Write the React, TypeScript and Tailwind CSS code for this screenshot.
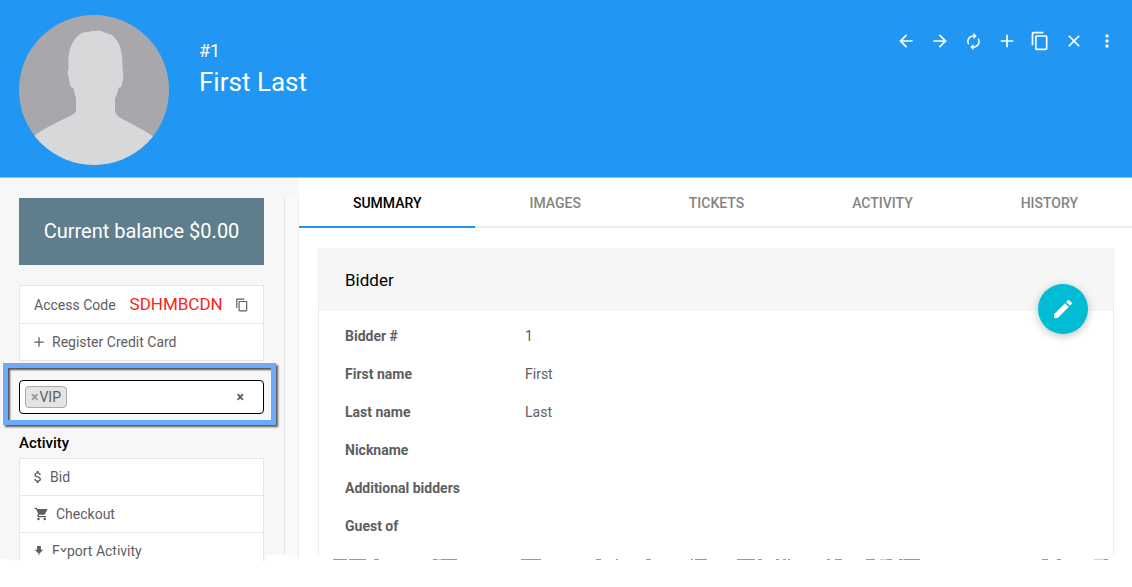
import React from "react";

type IconProps = { className?: string; children: React.ReactNode; box?: string };

function Icon({ className = "size-5", children, box = "0 0 24 24" }: IconProps) {
  return (
    <svg viewBox={box} className={className} fill="currentColor" aria-hidden="true">
      {children}
    </svg>
  );
}

const arrowBack = <path d="M20 11H7.8l5.6-5.6L12 4l-8 8 8 8 1.4-1.4L7.8 13H20v-2z" />;
const arrowForward = <path d="M12 4l-1.4 1.4 5.6 5.6H4v2h12.2l-5.6 5.6L12 20l8-8-8-8z" />;
const refresh = (
  <path d="M12 6v3l4-4-4-4v3c-4.420 0-8 3.580-8 8 0 1.570.46 3.030 1.240 4.260L6.700 14.800A5.870 5.870 0 0 1 6 12c0-3.310 2.690-6 6-6zm6.760 1.740L17.300 9.200c.44.84.7 1.790.7 2.800 0 3.310-2.690 6-6 6v-3l-4 4 4 4v-3c4.420 0 8-3.580 8-8 0-1.570-.46-3.030-1.240-4.260z" />
);
const plus = <path d="M19.500 13h-6.500v6.500h-2V13H4.500v-2H11V4.500h2V11h6.500v2z" />;
const copy = (
  <path d="M16 1H4a2 2 0 0 0-2 2v14h2V3h12V1zm3 4H8a2 2 0 0 0-2 2v14a2 2 0 0 0 2 2h11a2 2 0 0 0 2-2V7a2 2 0 0 0-2-2zm0 16H8V7h11v14z" />
);
const close = <path d="M19 6.400 17.600 5 12 10.600 6.400 5 5 6.400 10.600 12 5 17.600 6.400 19 12 13.400 17.600 19 19 17.600 13.400 12z" />;
const more = (
  <path d="M12 8a2 2 0 1 0 0-4 2 2 0 0 0 0 4zm0 2a2 2 0 1 0 0 4 2 2 0 0 0 0-4zm0 6a2 2 0 1 0 0 4 2 2 0 0 0 0-4z" />
);
const pencil = (
  <path d="M3 17.250V21h3.750L17.810 9.940l-3.750-3.750L3 17.250zM20.710 7.040a1 1 0 0 0 0-1.410l-2.340-2.340a1 1 0 0 0-1.410 0l-1.830 1.830 3.750 3.750 1.830-1.830z" />
);
const dollar = (
  <path d="M11.800 10.900c-2.270-.59-3-1.200-3-2.150 0-1.090 1.010-1.850 2.700-1.850 1.780 0 2.440.85 2.500 2.100h2.210c-.07-1.720-1.120-3.300-3.210-3.810V3h-3v2.160c-1.940.42-3.500 1.680-3.500 3.610 0 2.310 1.910 3.460 4.700 4.130 2.500.6 3 1.480 3 2.410 0 .69-.49 1.790-2.700 1.790-2.060 0-2.870-.92-2.980-2.100h-2.200c.12 2.190 1.760 3.420 3.680 3.830V21h3v-2.150c1.950-.37 3.500-1.500 3.500-3.550 0-2.840-2.430-3.810-4.700-4.400z" />
);
const cart = (
  <path d="M7 18a2 2 0 1 0 0 4 2 2 0 0 0 0-4zM1 2v2h2l3.600 7.590-1.350 2.450A2 2 0 0 0 7 17h12v-2H7.420a.25.25 0 0 1-.25-.25l.03-.12.900-1.630h7.450c.75 0 1.410-.41 1.750-1.030L20.880 5.480A1 1 0 0 0 20 4H5.210l-.94-2H1zm16 16a2 2 0 1 0 0 4 2 2 0 0 0 0-4z" />
);
const download = <path d="M21 10h-5V2H8v8H3l9 9 9-9zM10 20h4v3h-4z" />;

const actions = [
  { label: "Previous", icon: arrowBack, size: "size-[20px]" },
  { label: "Next", icon: arrowForward, size: "size-[20px]" },
  { label: "Refresh", icon: refresh, size: "size-[19px]" },
  { label: "Add", icon: plus, size: "size-[20px]" },
  { label: "Duplicate", icon: copy, size: "size-[20px]" },
  { label: "Close", icon: close, size: "size-[20px]" },
  { label: "More", icon: more, size: "size-[20px]" },
];

const tabs = ["SUMMARY", "IMAGES", "TICKETS", "ACTIVITY", "HISTORY"];

const fields = [
  ["Bidder #", "1"],
  ["First name", "First"],
  ["Last name", "Last"],
  ["Nickname", ""],
  ["Additional bidders", ""],
  ["Guest of", ""],
];

const activities = [
  { label: "Bid", icon: dollar, size: "w-2 h-4", box: "6 2 12 20" },
  { label: "Checkout", icon: cart, size: "size-[14px]", box: "0 1 22 22" },
  { label: "Export Activity", icon: download, size: "size-[10px]", box: "2 2 20 21" },
];

function Header() {
  return (
    <header className="flex items-start border-b border-[#a9bccb] bg-[#2196f3] px-[19px] pt-[15px] pb-3 text-white">
      <svg viewBox="0 0 150 150" className="size-[150px] shrink-0 rounded-full" role="img" aria-label="Profile picture">
        <rect width="150" height="150" fill="#a8a8ac" />
        <path
          fill="#d6d8da"
          d="M76 16c4-.6 8 .2 10 2l2-.5 1 1.500 3 .5c4 3 8 8 9.500 14 2 7 2 14 2 21 1.500 4 .7 9-.5 15-.6 2.500-2 3-3.500 3.500-1 5-2 8-3.500 10v13c.4 2 2 4 4 6 10 6 24 12 35 20V150H15v-29c12-9 26-15 38-21 3-2 4-3 4-5V83c-1-3-2-6-2.500-10-2-.5-3.500-1-3.500-3-1-5-1-8-2-10-.4-2-.3-4 .5-6-.3-10 0-17 3-24 3-6 7-11 12-12.500 4-1 7-.4 8-1.500z"
        />
      </svg>
      <div className="ml-[30px] flex-1 pt-6">
        <p className="text-lg leading-6">#1</p>
        <h1 className="text-[26px] leading-[38px]">First Last</h1>
      </div>
      <nav aria-label="Record actions" className="-mr-[6px] flex w-[225px] justify-between pt-[14px]">
        {actions.map((a) => (
          <button key={a.label} type="button" aria-label={a.label} className="flex size-6 items-center justify-center">
            <Icon className={a.size}>{a.icon}</Icon>
          </button>
        ))}
      </nav>
    </header>
  );
}

function Sidebar() {
  return (
    <aside className="w-[299px] shrink-0 bg-[#f7f7f7] pt-5">
      <div className="h-full w-full border-r border-[#ececec] bg-[#fafafa] pr-[13px]">
        <div className="h-full border-r border-[#e4e4e4] bg-[#f7f7f7] pr-5 pl-[19px]">
          <div className="bg-[#607d8b] py-5 text-center text-xl leading-[27px] text-white">Current balance $0.00</div>

          <ul className="mt-5 divide-y divide-[#e6e6e6] border border-[#e6e6e6] bg-white text-sm text-[#5e5e5e]">
            <li className="flex h-[38px] items-center px-[14px]">
              <span>Access Code</span>
              <span className="ml-[14px] text-[17px] text-[#fb2418]">SDHMBCDN</span>
              <button type="button" aria-label="Copy access code" className="ml-auto">
                <Icon className="size-[14px]">{copy}</Icon>
              </button>
            </li>
            <li>
              <a href="#register" className="flex h-9 items-center gap-2 px-[14px]">
                <Icon className="size-[10px]" box="4 4 16 16">{plus}</Icon>
                Register Credit Card
              </a>
            </li>
          </ul>

          <div className="relative mt-[19px]">
            <div className="flex h-[34px] items-center rounded border border-black bg-white px-[5px] text-sm text-[#5e5e5e]">
              <span className="flex h-[22px] items-center gap-px rounded border border-[#aaa] bg-[#e4e4e4] px-[5px]">
                <button type="button" aria-label="Remove VIP" className="font-bold text-[#999]">×</button>
                <span>VIP</span>
              </span>
              <input aria-label="Tags" className="min-w-0 flex-1 bg-transparent outline-none" />
              <button type="button" aria-label="Clear tags" className="mr-[14px] font-bold">×</button>
            </div>
            <div className="pointer-events-none absolute -top-[17px] -right-[12px] -bottom-[11px] -left-4 border-[5px] border-[#6cabfa] shadow-[2px_2px_2px_#555,inset_2px_2px_2px_#555]" />
          </div>

          <h2 className="mt-[19px] text-[15px] leading-5 font-medium text-black">Activity</h2>
          <ul className="mt-[5px] divide-y divide-[#e6e6e6] border border-[#e6e6e6] bg-white text-sm text-[#5e5e5e]">
            {activities.map((a) => (
              <li key={a.label}>
                <a href="#activity" className="flex h-9 items-center gap-2 px-[14px]">
                  <Icon className={a.size} box={a.box}>{a.icon}</Icon>
                  {a.label}
                </a>
              </li>
            ))}
          </ul>
        </div>
      </div>
    </aside>
  );
}

function Summary() {
  return (
    <main className="min-w-0 flex-1">
      <div role="tablist" className="flex text-sm">
        {tabs.map((t, i) => (
          <button
            key={t}
            type="button"
            role="tab"
            aria-selected={i === 0}
            className={
              i === 0
                ? "h-[50px] flex-auto border-b-2 border-[#2196f3] pt-[2px] font-medium text-black"
                : "h-[50px] flex-auto border-b-2 border-[#eee] pt-[2px] font-medium text-[#848484]"
            }
          >
            {t}
          </button>
        ))}
      </div>
      <section className="relative mr-[18px] ml-[19px] mt-5 border-x border-[#ececec]">
        <h2 className="bg-[#f6f6f6] px-[26px] pt-5 pb-[19px] text-[17px] leading-6 text-black">Bidder</h2>
        <button
          type="button"
          aria-label="Edit bidder"
          className="absolute top-9 right-[25px] flex size-[50px] items-center justify-center rounded-full bg-[#00bcd4] text-white shadow-[0_2px_8px_rgba(0,0,0,0.25)]"
        >
          <Icon className="size-6">{pencil}</Icon>
        </button>
        <dl className="px-[26px] pt-[6px] pb-8 text-sm text-[#5e5e5e]">
          {fields.map(([k, v]) => (
            <div key={k} className="flex h-[38px] items-center">
              <dt className="w-[180px] font-bold">{k}</dt>
              <dd>{v}</dd>
            </div>
          ))}
        </dl>
      </section>
    </main>
  );
}

function TornEdge() {
  return (
    <svg
      viewBox="0 0 1132 40"
      preserveAspectRatio="none"
      className="pointer-events-none absolute inset-x-0 bottom-0 h-10 w-full"
      aria-hidden="true"
    >
      <path
        fill="#fff"
        d="M0 11l3 1 4 0 3 1 3-1 4 2 4-1 4 0 3 0 3 0 0-5h12l0 5 6 0 0-6h8l4-2 6 0 0 9 46 0 0-6 8 0 0 6 20 0 0 2 85 0 40-2 0-6h16l3-1 4 2 5 0 4 2 5-1 3-3 6 0 20 1h780l20 1V40H0z"
      />
      <path
        stroke="#999"
        fill="none"
        d="M333 12.500h14M349 12.500h17M374 12.500h5M433 12.500h4M441 12.500h16M521 12.500h20M596 12.500h5M616 12.500h2M646 12.500h5M691 12.500h2M695 12.500h12M737 12.500h18M758 12.500h4M776 12.500h3M783 12.500h3M788 12.500h2M827 12.500h3M835 12.500h7M866 12.500h9M887 12.500h5M899 12.500h3M904 12.500h16M1042 12.500h6M1057 12.500h4M1104 12.500h4"
      />
      <path stroke="#d5d5d5" fill="none" d="M880 12.500h7M902 12.500h2M437 12.500h4M1094 12.500h10" />
    </svg>
  );
}

export default function App() {
  return (
    <div className="relative flex min-h-screen flex-col overflow-hidden bg-white font-['Roboto',sans-serif]">
      <Header />
      <div className="flex flex-1">
        <Sidebar />
        <Summary />
      </div>
      <TornEdge />
    </div>
  );
}
